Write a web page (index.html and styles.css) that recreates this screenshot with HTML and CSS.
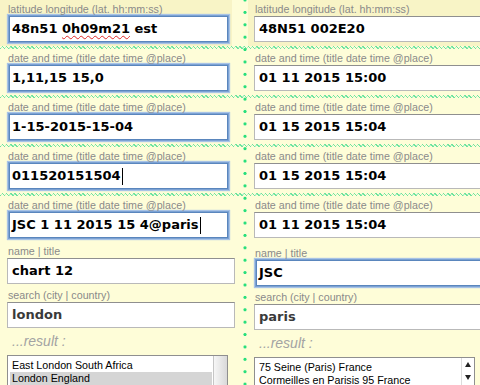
FILE: index.html
```html
<!DOCTYPE html>
<html lang="en">
<head>
  <meta charset="UTF-8" />
  <title>chart input</title>
  <link rel="stylesheet" href="styles.css">
</head>
<body>
  <div class="sheet">

    <!-- coordinates -->
    <div class="pair sep hl">
      <div class="cell">
        <div class="label">latitude longitude (lat. hh:mm:ss)</div>
        <div class="field focus">48n51 <span class="typo">0h09m21</span> est</div>
      </div>
      <div class="cell">
        <div class="label">latitude longitude (lat. hh:mm:ss)</div>
        <div class="field">48N51 002E20</div>
      </div>
    </div>

    <!-- dates -->
    <div class="pair sep">
      <div class="cell">
        <div class="label">date and time (title date time @place)</div>
        <div class="field focus">1,11,15 15,0</div>
      </div>
      <div class="cell">
        <div class="label">date and time (title date time @place)</div>
        <div class="field">01 11 2015 15:00</div>
      </div>
    </div>

    <div class="pair sep">
      <div class="cell">
        <div class="label">date and time (title date time @place)</div>
        <div class="field focus">1-15-2015-15-04</div>
      </div>
      <div class="cell">
        <div class="label">date and time (title date time @place)</div>
        <div class="field">01 15 2015 15:04</div>
      </div>
    </div>

    <div class="pair sep">
      <div class="cell">
        <div class="label">date and time (title date time @place)</div>
        <div class="field focus">011520151504<span class="caret"></span></div>
      </div>
      <div class="cell">
        <div class="label">date and time (title date time @place)</div>
        <div class="field">01 15 2015 15:04</div>
      </div>
    </div>

    <div class="pair">
      <div class="cell">
        <div class="label">date and time (title date time @place)</div>
        <div class="field focus">JSC 1 11 2015 15 4@paris<span class="caret"></span></div>
      </div>
      <div class="cell">
        <div class="label">date and time (title date time @place)</div>
        <div class="field">01 11 2015 15:04</div>
      </div>
    </div>

    <!-- name + place search -->
    <div class="pair plain">
      <div class="cell">
        <div class="label">name | title</div>
        <div class="field">chart 12</div>
        <div class="label gap">search (city | country)</div>
        <div class="field dim">london</div>
        <div class="result">...result :</div>
        <div class="list">
          <div class="opts">
            <div class="opt">East London South Africa</div>
            <div class="opt sel">London England</div>
          </div>
          <div class="scroll"></div>
        </div>
      </div>
      <div class="cell">
        <div class="label">name | title</div>
        <div class="field focus">JSC</div>
        <div class="label gap">search (city | country)</div>
        <div class="field dim">paris</div>
        <div class="result">...result :</div>
        <div class="list">
          <div class="opts">
            <div class="opt">75 Seine (Paris) France</div>
            <div class="opt">Cormeilles en Parisis 95 France</div>
          </div>
          <div class="scroll arrows">
            <span class="up"></span>
            <span class="down"></span>
          </div>
        </div>
      </div>
    </div>

  </div>
</body>
</html>
```

FILE: styles.css
```css
html, body {
  margin: 0;
  padding: 0;
  background: #fefdd8;
  font-family: "Liberation Sans", Arial, sans-serif;
  overflow: hidden;
}

/* green dotted rule between the two columns */
.sheet {
  min-height: 385px;
  background: radial-gradient(circle, #27df7c 0 1.3px, transparent 1.9px) 239px -6.2px / 12px 12.4px repeat-y;
}

.pair {
  display: grid;
  grid-template-columns: 232px 244px;
  column-gap: 16px;
}

/* hatched green line under each date row */
.pair.sep {
  padding-bottom: 3px;
  background:
    repeating-linear-gradient(45deg, #6fe49d 0 1px, transparent 1px 3px) left bottom / 100% 3px no-repeat,
    repeating-linear-gradient(-45deg, #b3f2c9 0 1px, transparent 1px 3px) left bottom / 100% 3px no-repeat;
}

.cell {
  padding: 3px 0 4px 7px;
}

.cell + .cell {
  padding-left: 6px;
}

.pair.hl .cell {
  background: #f8f4c6;
}

.pair.plain .cell + .cell {
  padding-top: 5px;
}

.label {
  font-size: 10.7px;
  line-height: 13px;
  color: #8a8a8a;
  padding-left: 1px;
  white-space: nowrap;
}

.label.gap {
  margin-top: 5px;
}

.field {
  box-sizing: border-box;
  height: 26px;
  width: 228px;
  background: #fff;
  border: 1px solid #b9b9b9;
  border-top-color: #8f8f8f;
  padding: 0 4px;
  font: bold 13px/24px "DejaVu Sans", Verdana, sans-serif;
  color: #000;
  white-space: nowrap;
  overflow: hidden;
}

.cell + .cell .field {
  width: 240px;
}

.field.focus {
  width: 219px;
  margin-left: 2px;
  padding-left: 2px;
  border-color: #5a86bd;
  box-shadow: 0 0 0 1px #7ca2d3, 0 0 1px 2px #a8c3e6;
}

.field.dim {
  color: #3a3a3a;
}

.typo {
  text-decoration: underline wavy #e02a2a;
  text-decoration-thickness: 1px;
  text-underline-offset: 2px;
}

.caret {
  display: inline-block;
  width: 1px;
  height: 17px;
  background: #000;
  vertical-align: middle;
  margin-left: 1px;
}

.result {
  font-style: italic;
  font-size: 14px;
  line-height: 18px;
  color: #a3a3a3;
  padding: 4px 0 0 5px;
}

.list {
  display: flex;
  box-sizing: border-box;
  width: 221px;
  height: 40px;
  margin-top: 5px;
  background: #fff;
  border: 1px solid #8f8f8f;
  font-size: 10.7px;
  line-height: 13px;
  color: #000;
}

.opts {
  flex: 1;
  padding: 3px 1px 0 2px;
}

.opt {
  padding-left: 2px;
  white-space: nowrap;
}

.opt.sel {
  background: #d5d5d5;
}

.scroll {
  width: 13px;
  border-left: 1px solid #c6c6c6;
  background: linear-gradient(90deg, #f6f6f6, #d9d9d9);
}

.scroll.arrows {
  width: 12px;
  background: #fff;
  border-left-color: #dcdcdc;
  display: flex;
  flex-direction: column;
  align-items: center;
  gap: 8px;
  padding-top: 4px;
}

.up, .down {
  width: 0;
  height: 0;
  border-left: 3px solid transparent;
  border-right: 3px solid transparent;
}

.up {
  border-bottom: 5px solid #222;
}

.down {
  border-top: 5px solid #222;
}
```
